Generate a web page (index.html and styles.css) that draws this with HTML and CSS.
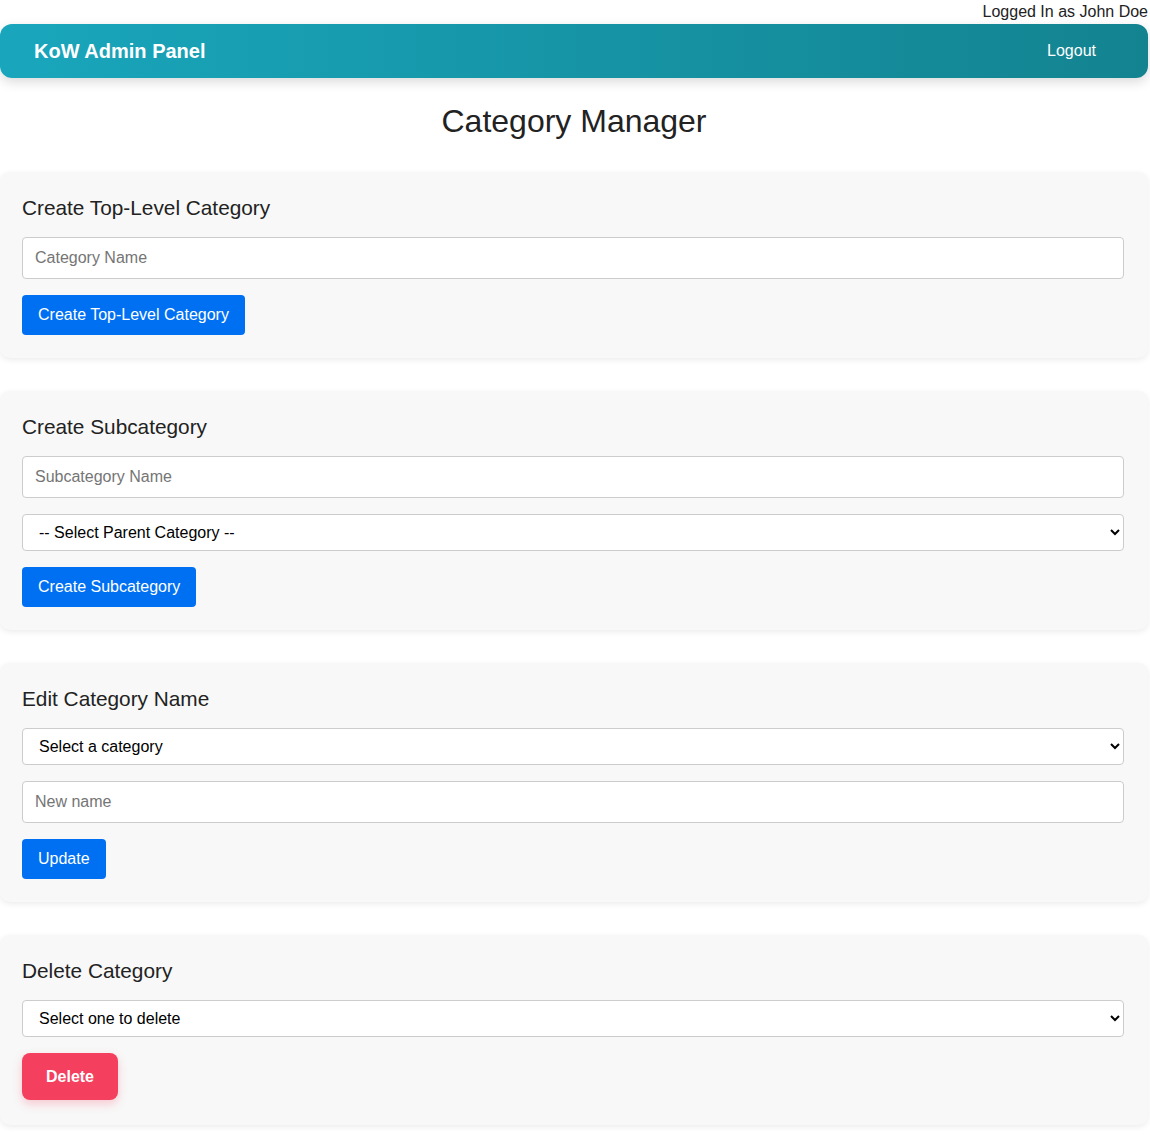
FILE: index.html
```html
<!DOCTYPE html>
<html lang="en">
<head>
    <meta charset="UTF-8">
    <meta name="viewport" content="width=device-width, initial-scale=1.0">
    <title>Category Manager</title>
    <link rel="stylesheet" href="styles.css">
</head>
<body>
    <div class="page">
        <div class="user-bar">Logged In as John Doe</div>
        <header class="top-nav">
            <span class="brand">KoW Admin Panel</span>
            <a href="#" class="logout-link">Logout</a>
        </header>

        <h1 class="page-title">Category Manager</h1>

        <section class="card">
            <h3>Create Top-Level Category</h3>
            <input type="text" class="field" placeholder="Category Name">
            <button class="btn">Create Top-Level Category</button>
        </section>

        <section class="card">
            <h3>Create Subcategory</h3>
            <input type="text" class="field" placeholder="Subcategory Name">
            <select class="field select">
                <option>-- Select Parent Category --</option>
            </select>
            <button class="btn">Create Subcategory</button>
        </section>

        <section class="card">
            <h3>Edit Category Name</h3>
            <select class="field select">
                <option>Select a category</option>
            </select>
            <input type="text" class="field" placeholder="New name">
            <button class="btn">Update</button>
        </section>

        <section class="card">
            <h3>Delete Category</h3>
            <select class="field select">
                <option>Select one to delete</option>
            </select>
            <button class="btn btn-delete">Delete</button>
        </section>
    </div>
</body>
</html>
```

FILE: styles.css
```css
* {
    margin: 0;
    padding: 0;
    box-sizing: border-box;
    font-family: 'Liberation Sans', Arial, sans-serif;
}

body {
    background-color: #fff;
    color: #222;
}

.page {
    margin-right: 2px;
}

.user-bar {
    height: 24px;
    line-height: 24px;
    text-align: right;
    font-size: 16px;
    color: #222;
}

.top-nav {
    height: 54px;
    display: flex;
    align-items: center;
    justify-content: space-between;
    padding: 0 52px 0 34px;
    background: linear-gradient(90deg, #19a6bc, #138390);
    border-radius: 12px;
    box-shadow: 0 4px 12px rgba(0, 0, 0, 0.15);
}

.brand {
    color: #fff;
    font-size: 20px;
    font-weight: bold;
}

.logout-link {
    color: #fff;
    font-size: 16px;
    text-decoration: none;
}

.page-title {
    text-align: center;
    font-size: 32px;
    font-weight: normal;
    line-height: 37px;
    margin: 25px 0 32px;
    color: #222;
}

.card {
    display: flex;
    flex-direction: column;
    align-items: flex-start;
    background-color: #f8f8f8;
    border-radius: 10px;
    padding: 24px 24px 23px 22px;
    margin-bottom: 33px;
    box-shadow: 0 2px 6px rgba(0, 0, 0, 0.08);
}

.card h3 {
    font-size: 20.8px;
    font-weight: normal;
    line-height: 23px;
    margin-bottom: 18px;
    color: #222;
}

.field {
    width: 100%;
    height: 42px;
    padding: 0 12px;
    margin-bottom: 16px;
    border: 1px solid #ccc;
    border-radius: 4px;
    background-color: #fff;
    font-size: 16px;
    color: #000;
}

.field::placeholder {
    color: #757575;
}

.select {
    height: 37px;
}

.btn {
    height: 40px;
    padding: 0 16px;
    background-color: #0070f3;
    color: #fff;
    font-size: 16px;
    border: none;
    border-radius: 4px;
    cursor: pointer;
}

.btn-delete {
    height: 47px;
    width: 96px;
    padding: 0;
    margin-bottom: 2px;
    background-color: #f43f5e;
    font-weight: bold;
    border-radius: 8px;
    box-shadow: 0 4px 10px rgba(244, 63, 94, 0.25);
}
```
